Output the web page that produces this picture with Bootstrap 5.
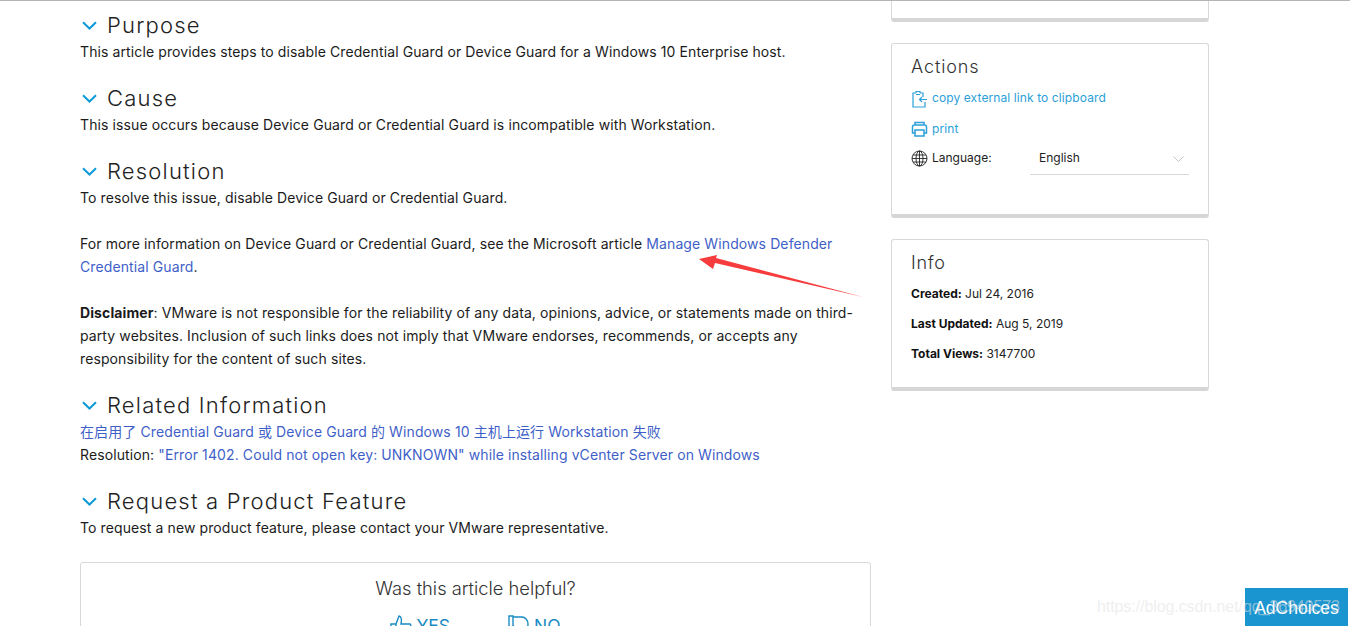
<!DOCTYPE html>
<html lang="en">
<head>
<meta charset="utf-8">
<title>VMware KB</title>
<link href="https://cdn.jsdelivr.net/npm/bootstrap@5.3.0/dist/css/bootstrap.min.css" rel="stylesheet">
<style>
html,body{height:626px;overflow:hidden;}
body{font-family:Inter,"Noto Sans CJK SC",sans-serif;font-size:14px;letter-spacing:.105px;line-height:23px;color:#1b1b1b;background:#fff;position:relative;}
.top-rule{border-top:1px solid #b4b4b4;}
.page-wrap{padding-left:80px;gap:20px;}
.main-col{width:791px;flex:none;padding-top:9px;}
.side-col{width:318px;flex:none;}
.kb-sec{margin-bottom:20px;}
.kb-head{height:30px;margin:0;font-family:Inter,sans-serif;font-size:22px;font-weight:300;letter-spacing:1.2px;line-height:30px;color:#222;gap:10px;}
.kb-head svg{margin-left:2px;flex:none;}
.kb-sec p{margin:0 0 23px;}
.kb-sec p:last-child{margin-bottom:0;}
.kb-sec a{color:#3f5fc8;text-decoration:none;}
.kb-box{border:1px solid #d8d8d8;border-radius:3px;}
.helpful{margin-top:23px;height:120px;padding-top:13px;text-align:center;}
.helpful h3{font-size:18.300px;font-weight:300;letter-spacing:0;line-height:24px;color:#333;margin:0 0 15px;}
.vote{color:#1a8bc4;font-size:17.500px;line-height:20px;gap:58px;letter-spacing:0;}
.s-card{border:1px solid #d8d8d8;border-bottom:4px solid #d6d6d6;border-radius:3px;background:#fff;padding:0 19px;margin-bottom:21px;}
.s-stub{height:21px;border-top:0;border-radius:0 0 3px 3px;}
.s-actions{height:175px;}
.s-info{height:152px;}
.s-title{font-size:18px;font-weight:300;letter-spacing:.9px;line-height:24px;margin:0;color:#333;padding-top:11px;}
.s-head-gap{margin-bottom:9px;}
.s-info .s-title{margin-bottom:4px;letter-spacing:.7px;}
.s-line{font-size:12px;line-height:30px;color:#222;letter-spacing:0;}
.s-line strong{font-weight:700;color:#111;}
.s-link{font-size:12px;line-height:20px;color:#2a9fd8;gap:4px;letter-spacing:.1px;}
.s-link-a{height:31px;}
.s-link-b{height:29px;}
.s-ico{margin-top:2px;flex:none;}
.lang{font-size:12px;line-height:20px;color:#222;letter-spacing:0;}
.lang-label{width:119px;gap:4px;}
.lang-select{width:159px;height:27px;border-bottom:1px solid #d8d8d8;padding:0 5px 0 9px;}
.arrow-mark{position:absolute;left:695px;top:250px;}
.ad-box{position:absolute;left:1245px;top:588px;width:103px;height:38px;background:#1b95d0;color:#fff;font-size:17.500px;letter-spacing:0;line-height:40px;text-align:center;font-family:"Liberation Sans",sans-serif;}
.mark-text{position:absolute;left:1097px;top:596px;font-family:"Liberation Sans",sans-serif;font-size:16px;line-height:22px;color:rgba(225,225,225,.55);letter-spacing:-.08px;white-space:nowrap;}
</style>
</head>
<body>
<div class="top-rule"></div>
<div class="page-wrap d-flex">
  <main class="main-col">
    <section class="kb-sec">
      <h2 class="kb-head d-flex align-items-center"><svg width="15" height="9" viewBox="0 0 15 9"><path d="M1 1.2 7.5 7.500 14 1.200" fill="none" stroke="#0d9ad8" stroke-width="2"/></svg>Purpose</h2>
      <p>This article provides steps to disable Credential Guard or Device Guard for a Windows 10 Enterprise host.</p>
    </section>
    <section class="kb-sec">
      <h2 class="kb-head d-flex align-items-center"><svg width="15" height="9" viewBox="0 0 15 9"><path d="M1 1.2 7.5 7.500 14 1.200" fill="none" stroke="#0d9ad8" stroke-width="2"/></svg>Cause</h2>
      <p>This issue occurs because Device Guard or Credential Guard is incompatible with Workstation.</p>
    </section>
    <section class="kb-sec">
      <h2 class="kb-head d-flex align-items-center"><svg width="15" height="9" viewBox="0 0 15 9"><path d="M1 1.2 7.5 7.500 14 1.200" fill="none" stroke="#0d9ad8" stroke-width="2"/></svg>Resolution</h2>
      <p>To resolve this issue, disable Device Guard or Credential Guard.</p>
      <p>For more information on Device Guard or Credential Guard, see the Microsoft article <a href="#">Manage Windows Defender Credential Guard</a>.</p>
      <p><strong>Disclaimer</strong>: VMware is not responsible for the reliability of any data, opinions, advice, or statements made on third-party websites. Inclusion of such links does not imply that VMware endorses, recommends, or accepts any responsibility for the content of such sites.</p>
    </section>
    <section class="kb-sec">
      <h2 class="kb-head d-flex align-items-center"><svg width="15" height="9" viewBox="0 0 15 9"><path d="M1 1.2 7.5 7.500 14 1.200" fill="none" stroke="#0d9ad8" stroke-width="2"/></svg>Related Information</h2>
      <div><a href="#">在启用了 Credential Guard 或 Device Guard 的 Windows 10 主机上运行 Workstation 失败</a></div>
      <div>Resolution: <a href="#">"Error 1402. Could not open key: UNKNOWN" while installing vCenter Server on Windows</a></div>
    </section>
    <section class="kb-sec">
      <h2 class="kb-head d-flex align-items-center"><svg width="15" height="9" viewBox="0 0 15 9"><path d="M1 1.2 7.5 7.500 14 1.200" fill="none" stroke="#0d9ad8" stroke-width="2"/></svg>Request a Product Feature</h2>
      <p>To request a new product feature, please contact your VMware representative.</p>
    </section>
    <div class="kb-box helpful">
      <h3>Was this article helpful?</h3>
      <div class="vote d-flex justify-content-center align-items-center">
        <span class="d-flex align-items-center gap-1"><svg width="22" height="22" viewBox="0 0 22 22"><path d="M1 9h5v11H1zM6 9l3-8c2 0 3 3 2 8h9c1 0 1 2 0 3l-2 8H6" fill="none" stroke="#1a8bc4" stroke-width="1.400"/></svg>YES</span>
        <span class="d-flex align-items-center gap-1"><svg width="22" height="22" viewBox="0 0 22 22"><path d="M1 1h4v12H1zM5 2h9c3 0 6 3 6 7s-2 8-5 8l-4 1-1-5-5-2" fill="none" stroke="#1a8bc4" stroke-width="1.400"/></svg>NO</span>
      </div>
    </div>
  </main>
  <aside class="side-col">
    <div class="s-card s-stub"></div>
    <div class="s-card s-actions">
      <h4 class="s-title s-head-gap">Actions</h4>
      <div class="s-link s-link-a d-flex align-items-start"><svg class="s-ico" width="17" height="18" viewBox="0 0 17 18"><path d="M5 3H2v14h12v-5M12 7V3H9M5 3V1.500h4V3M5 4.500h4M16 9.500H8.500M11 7l-2.500 2.500L11 12" fill="none" stroke="#2a9fd8" stroke-width="1.200"/></svg>copy external link to clipboard</div>
      <div class="s-link s-link-b d-flex align-items-start"><svg class="s-ico" width="17" height="16" viewBox="0 0 17 16"><path d="M4 4V1.500h9V4M4 12H1.500V6c0-1 1-2 2-2h10c1 0 2 1 2 2v6H13M4 9h9v6H4z" fill="none" stroke="#2a9fd8" stroke-width="1.500"/></svg>print</div>
      <div class="lang d-flex">
        <div class="lang-label d-flex align-items-start"><svg class="s-ico" width="17" height="17" viewBox="0 0 17 17"><g fill="none" stroke="#222" stroke-width=".9"><circle cx="8.500" cy="8.500" r="7.500"/><ellipse cx="8.500" cy="8.500" rx="3.500" ry="7.500"/><path d="M8.500 1v15M1 8.500h15M2 5h13M2 12h13"/></g></svg>Language:</div>
        <div class="lang-select d-flex justify-content-between"><span>English</span><svg class="mt-2" width="11" height="7" viewBox="0 0 11 7"><path d="M.5.500l5 5 5-5" fill="none" stroke="#c4c4c4"/></svg></div>
      </div>
    </div>
    <div class="s-card s-info">
      <h4 class="s-title">Info</h4>
      <div class="s-line"><strong>Created:</strong> Jul 24, 2016</div>
      <div class="s-line"><strong>Last Updated:</strong> Aug 5, 2019</div>
      <div class="s-line"><strong>Total Views:</strong> 3147700</div>
    </div>
  </aside>
</div>
<svg class="arrow-mark" width="170" height="50" viewBox="0 0 170 50"><path d="M4 9 22 5 21 8 168 47 20 13 18 19z" fill="#f63c3c"/></svg>
<div class="ad-box">AdChoices</div>
<div class="mark-text">https://blog.csdn.net/qq_36940573</div>
<script src="https://cdn.jsdelivr.net/npm/bootstrap@5.3.0/dist/js/bootstrap.bundle.min.js"></script>
</body>
</html>
